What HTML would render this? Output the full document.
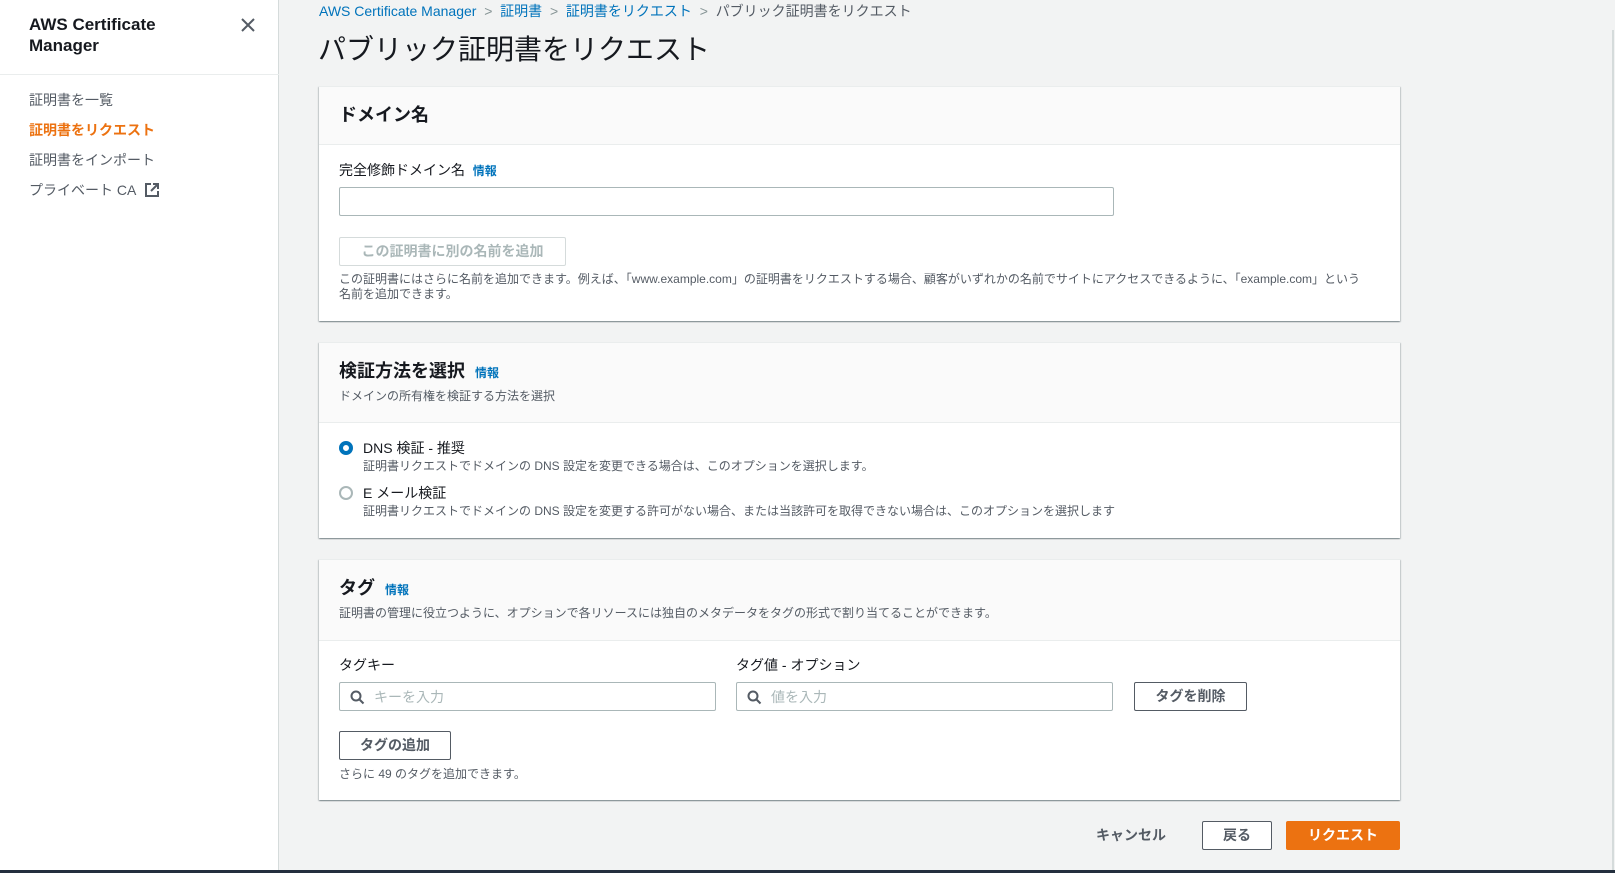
<!DOCTYPE html>
<html><head><meta charset="utf-8"><style>
*{box-sizing:border-box;margin:0;padding:0}
body{width:1615px;height:873px;overflow:hidden;background:#f2f3f3;font-family:"Liberation Sans","Noto Sans CJK JP",sans-serif;color:#16191f;position:relative}
.a{position:absolute;white-space:nowrap}
.side{position:absolute;left:0;top:0;width:279px;height:870px;background:#fff;border-right:1px solid #d5dbdb}
.panel{position:absolute;left:319px;width:1081px;background:#fff;box-shadow:0 1px 1px 0 rgba(0,28,36,.3),1px 1px 1px 0 rgba(0,28,36,.15),-1px 1px 1px 0 rgba(0,28,36,.15);border-top:1px solid #eaeded}
.hdr{position:absolute;left:0;top:0;width:100%;background:#fafafa;border-bottom:1px solid #eaeded}
.inp{position:absolute;border:1px solid #aab7b8;border-radius:2px;background:#fff}
.btn{position:absolute;border:1px solid #545b64;border-radius:2px;background:#fff;font-weight:bold;font-size:14px;color:#545b64;text-align:center}
.info{color:#0073bb;font-weight:bold;font-size:12px}
.s12{font-size:12px;color:#545b64}
</style></head><body>
<div class="side">
<div class="a" style="left:29px;top:14px;font-size:17px;font-weight:bold;line-height:21px;color:#16191f">AWS Certificate<br>Manager</div>
<svg class="a" style="left:240px;top:17px" width="16" height="16" viewBox="0 0 16 16"><path d="M2 2L14 14M14 2L2 14" stroke="#545b64" stroke-width="2"/></svg>
<div style="position:absolute;left:0;top:74px;width:279px;border-top:1px solid #eaeded"></div>
<div class="a" style="left:29px;top:90px;font-size:14px;color:#545b64">証明書を一覧</div>
<div class="a" style="left:29px;top:120px;font-size:14px;color:#ec7211;font-weight:bold">証明書をリクエスト</div>
<div class="a" style="left:29px;top:150px;font-size:14px;color:#545b64">証明書をインポート</div>
<div class="a" style="left:29px;top:180px;font-size:14px;color:#545b64">プライベート CA</div>
<svg class="a" style="left:145px;top:183px" width="14" height="14" viewBox="0 0 14 14"><path d="M6 1H1V13H13V8M8 1H13V6M13 1L6 8" stroke="#545b64" stroke-width="2" fill="none"/></svg>
</div>
<div style="position:absolute;left:1612px;top:30px;width:2px;height:840px;background:#d5dbdb"></div>
<div style="position:absolute;left:0;top:870px;width:1615px;height:3px;background:#232f3e"></div>

<div class="a" style="left:319px;top:1px;font-size:14px;color:#0073bb">AWS Certificate Manager <span style="color:#879596">&nbsp;&gt;&nbsp;</span> 証明書 <span style="color:#879596">&nbsp;&gt;&nbsp;</span> 証明書をリクエスト <span style="color:#879596">&nbsp;&gt;&nbsp;</span> <span style="color:#545b64">パブリック証明書をリクエスト</span></div>
<div class="a" style="left:318px;top:28px;font-size:28px;color:#16191f">パブリック証明書をリクエスト</div>

<div class="panel" style="top:86px;height:235px">
<div class="hdr" style="height:58px"><div class="a" style="left:20px;top:14px;font-size:18px;font-weight:bold">ドメイン名</div></div>
<div class="a" style="left:20px;top:73px;font-size:14px">完全修飾ドメイン名 &nbsp;<span class="info">情報</span></div>
<div class="inp" style="left:20px;top:100px;width:775px;height:29px"></div>
<div class="btn" style="left:20px;top:150px;width:227px;height:29px;border-color:#d5dbdb;color:#aab7b8;line-height:27px">この証明書に別の名前を追加</div>
<div class="a s12" style="left:20px;top:185px;line-height:15px">この証明書にはさらに名前を追加できます。例えば、「www.example.com」の証明書をリクエストする場合、顧客がいずれかの名前でサイトにアクセスできるように、「example.com」という<br>名前を追加できます。</div>
</div>

<div class="panel" style="top:342px;height:196px">
<div class="hdr" style="height:80px">
<div class="a" style="left:20px;top:14px;font-size:18px;font-weight:bold">検証方法を選択 &nbsp;<span class="info">情報</span></div>
<div class="a s12" style="left:20px;top:44px">ドメインの所有権を検証する方法を選択</div></div>
<div class="a" style="left:20px;top:98px;width:14px;height:14px;border-radius:50%;border:4px solid #0073bb"></div>
<div class="a" style="left:44px;top:95px;font-size:14px">DNS 検証 - 推奨</div>
<div class="a s12" style="left:44px;top:114px">証明書リクエストでドメインの DNS 設定を変更できる場合は、このオプションを選択します。</div>
<div class="a" style="left:20px;top:143px;width:14px;height:14px;border-radius:50%;border:2px solid #aab7b8"></div>
<div class="a" style="left:44px;top:140px;font-size:14px">E メール検証</div>
<div class="a s12" style="left:44px;top:159px">証明書リクエストでドメインの DNS 設定を変更する許可がない場合、または当該許可を取得できない場合は、このオプションを選択します</div>
</div>

<div class="panel" style="top:559px;height:241px">
<div class="hdr" style="height:81px">
<div class="a" style="left:20px;top:14px;font-size:18px;font-weight:bold">タグ &nbsp;<span class="info">情報</span></div>
<div class="a s12" style="left:20px;top:44px">証明書の管理に役立つように、オプションで各リソースには独自のメタデータをタグの形式で割り当てることができます。</div></div>
<div class="a" style="left:20px;top:95px;font-size:14px">タグキー</div>
<div class="a" style="left:417px;top:95px;font-size:14px">タグ値 - オプション</div>
<div class="inp" style="left:20px;top:122px;width:377px;height:29px"><svg class="a" style="left:10px;top:7px" width="15" height="15" viewBox="0 0 15 15"><circle cx="6" cy="6" r="4.5" stroke="#545b64" stroke-width="2" fill="none"/><path d="M9.5 9.5L13.5 13.5" stroke="#545b64" stroke-width="2"/></svg><span class="a" style="left:34px;top:4px;font-size:14px;color:#aab7b8">キーを入力</span></div>
<div class="inp" style="left:417px;top:122px;width:377px;height:29px"><svg class="a" style="left:10px;top:7px" width="15" height="15" viewBox="0 0 15 15"><circle cx="6" cy="6" r="4.5" stroke="#545b64" stroke-width="2" fill="none"/><path d="M9.5 9.5L13.5 13.5" stroke="#545b64" stroke-width="2"/></svg><span class="a" style="left:34px;top:4px;font-size:14px;color:#aab7b8">値を入力</span></div>
<div class="btn" style="left:815px;top:122px;width:113px;height:29px;line-height:27px">タグを削除</div>
<div class="btn" style="left:20px;top:171px;width:112px;height:29px;line-height:27px">タグの追加</div>
<div class="a s12" style="left:20px;top:205px">さらに 49 のタグを追加できます。</div>
</div>

<div class="a" style="left:1096px;top:825px;font-size:14px;font-weight:bold;color:#545b64">キャンセル</div>
<div class="btn" style="left:1202px;top:821px;width:70px;height:29px;line-height:27px">戻る</div>
<div class="btn" style="left:1286px;top:821px;width:114px;height:29px;line-height:27px;background:#ec7211;border-color:#ec7211;color:#fff">リクエスト</div>
</body></html>
